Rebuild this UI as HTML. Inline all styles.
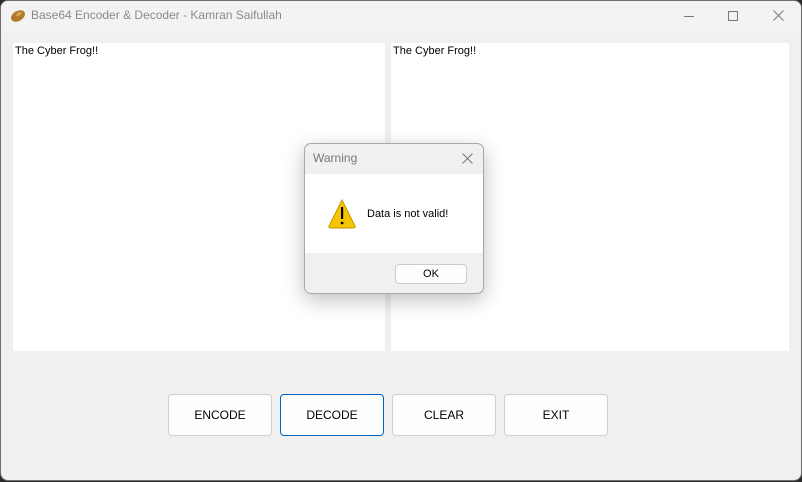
<!DOCTYPE html>
<html><head><style>
*{margin:0;padding:0;box-sizing:border-box}
body{width:802px;height:482px;background:#2b2b2b;overflow:hidden;font-family:"Segoe UI","Liberation Sans",sans-serif;position:relative}
.win{position:absolute;left:0;top:0;width:802px;height:481px;background:#f0f0f0;border:1px solid #6e6e6e;border-radius:8px 8px 8px 8px;overflow:hidden}
.tb{position:absolute;left:0;top:0;width:100%;height:31px;background:#f3f3f3}
.title{position:absolute;left:30px;top:7px;font-size:12px;color:#8a8a8a}
.ta{position:absolute;background:#fff;font-size:11px;color:#000;padding:2px 2px}
.btn{position:absolute;top:393px;width:104px;height:42px;background:#fdfdfd;border:1px solid #d0d0d0;border-radius:4px;font-size:12px;text-align:center;line-height:40px;color:#000}
.dlg{position:absolute;left:304px;top:143px;width:180px;height:151px;border:1px solid #a8a8a8;border-radius:7px;background:#f0f0f0;overflow:hidden;box-shadow:0 6px 20px rgba(0,0,0,.25)}
</style></head><body>
<div class="win">
<div class="tb">
<svg style="position:absolute;left:9px;top:8px" width="16" height="14" viewBox="0 0 16 14"><ellipse cx="8" cy="7" rx="7.5" ry="5" transform="rotate(-30 8 7)" fill="#b07a2a"/><ellipse cx="9" cy="5" rx="3" ry="1.6" transform="rotate(-30 9 5)" fill="#d9a650"/></svg>
<div class="title">Base64 Encoder &amp; Decoder - Kamran Saifullah</div>
<div style="position:absolute;left:683px;top:15px;width:10px;height:1px;background:#777"></div>
<div style="position:absolute;left:727px;top:10px;width:10px;height:10px;border:1px solid #777"></div>
<svg style="position:absolute;left:772px;top:9px" width="11" height="11"><path d="M0.5 0.5L10.5 10.5M10.5 0.5L0.5 10.5" stroke="#777" stroke-width="1"/></svg>
</div>
<div class="ta" style="left:12px;top:42px;width:372px;height:308px">The Cyber Frog!!</div>
<div class="ta" style="left:390px;top:42px;width:398px;height:308px">The Cyber Frog!!</div>
<div class="btn" style="left:167px">ENCODE</div>
<div class="btn" style="left:279px;border-color:#0067c0">DECODE</div>
<div class="btn" style="left:391px">CLEAR</div>
<div class="btn" style="left:503px">EXIT</div>
</div>
<div class="dlg">
<div style="position:absolute;left:8px;top:7px;font-size:12px;color:#777">Warning</div>
<svg style="position:absolute;left:157px;top:9px" width="11" height="11"><path d="M0.5 0.5L10.5 10.5M10.5 0.5L0.5 10.5" stroke="#777"/></svg>
<div style="position:absolute;left:0;top:30px;width:100%;height:79px;background:#fff"></div>
<svg style="position:absolute;left:22px;top:54px" width="30" height="32" viewBox="0 0 30 32"><path d="M15 2L28 28Q28.5 30 26.5 30L3.5 30Q1.5 30 2 28Z" fill="#f7c500" stroke="#c99400"/><rect x="14" y="9" width="2.2" height="12" fill="#000"/><circle cx="15.1" cy="25" r="1.4" fill="#000"/></svg>
<div style="position:absolute;left:62px;top:64px;font-size:11px;color:#000">Data is not valid!</div>
<div style="position:absolute;left:90px;top:120px;width:72px;height:20px;background:#fdfdfd;border:1px solid #ccc;border-radius:4px;font-size:11px;text-align:center;line-height:18px">OK</div>
</div>
</body></html>
